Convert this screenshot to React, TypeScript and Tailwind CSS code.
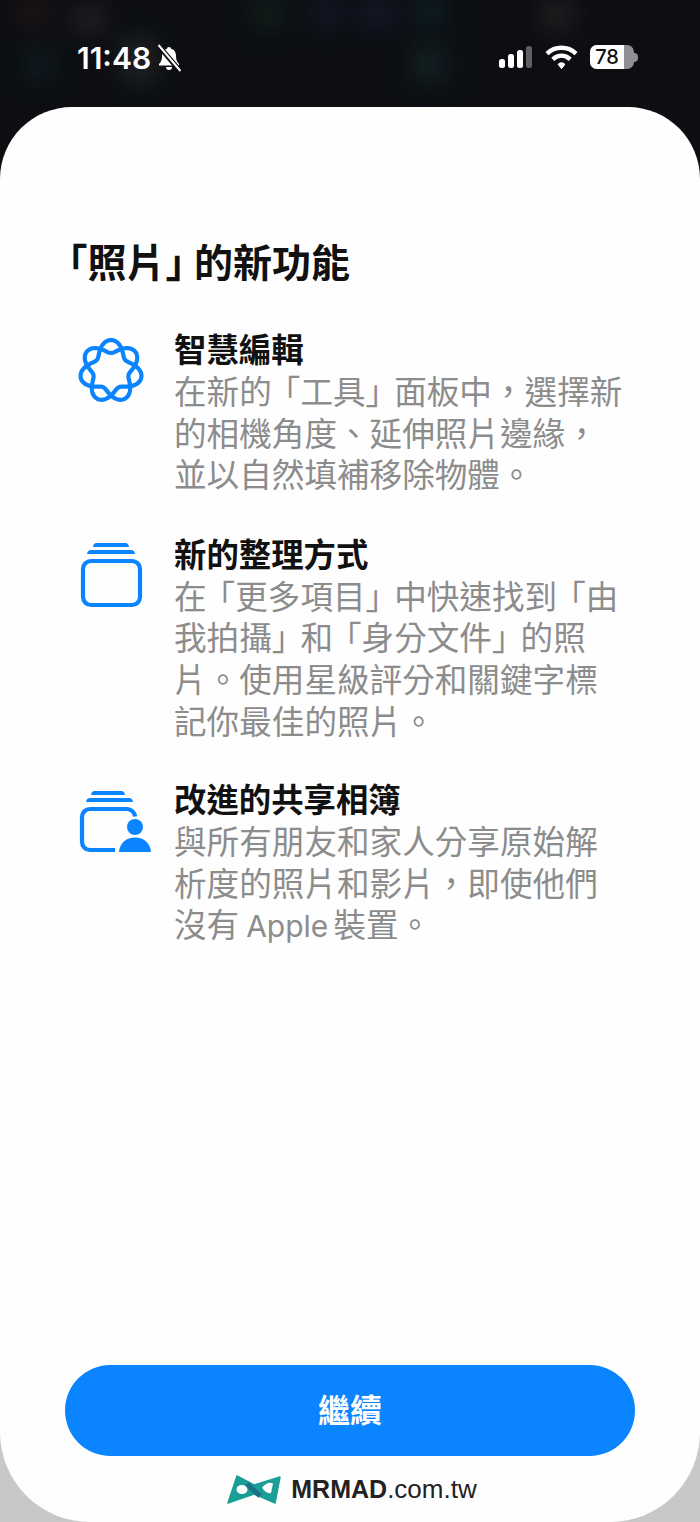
const F = '"Inter","Noto Sans CJK TC",sans-serif';

function weavePath() {
  const pts: string[] = [];
  const n = 280;
  for (let i = 0; i <= n; i++) {
    const t = (i / n) * 4 * Math.PI;
    const r = 24.5 + 6.5 * Math.cos(3.5 * t);
    const a = t - Math.PI / 2;
    pts.push(`${(33 + r * Math.cos(a)).toFixed(2)} ${(33 + r * Math.sin(a)).toFixed(2)}`);
  }
  return "M" + pts.join("L") + "Z";
}

function Sparkle() {
  return (
    <svg width="66" height="66" viewBox="0 0 66 66" fill="none" stroke="#0a84ff" strokeWidth="4.2" className="mt-[9px] ml-[24px]">
      <path d={weavePath()} strokeLinejoin="round" />
    </svg>
  );
}

function Stack() {
  return (
    <svg width="68" height="70" viewBox="0 0 68 70" fill="#0a84ff" className="mt-[6px] ml-[24px]">
      <path d="M15 7c.3-2.500 1.500-4 3.500-4h29c2 0 3.200 1.500 3.500 4z" />
      <path d="M9 14c.3-2.500 1.800-4 4-4h40c2.200 0 3.700 1.500 4 4z" />
      <rect x="5" y="21" width="57" height="44" rx="8" fill="none" stroke="#0a84ff" strokeWidth="4.2" />
    </svg>
  );
}

function Shared() {
  return (
    <svg width="76" height="70" viewBox="0 0 76 70" fill="#0a84ff" className="mt-[6px] ml-[24px]">
      <path d="M13 10c.3-2.500 1.500-4 3.500-4h27c2 0 3.200 1.500 3.500 4z" />
      <path d="M8 17c.3-2.500 1.800-4 4-4h39c2.200 0 3.700 1.500 4 4z" />
      <path d="M37 65H12a8 8 0 0 1-8-8V32a8 8 0 0 1 8-8h37a8 8 0 0 1 8 7.500" fill="none" stroke="#0a84ff" strokeWidth="4.2" />
      <circle cx="57" cy="42" r="8" />
      <path d="M41 67c.5-8.500 7-14.500 16-14.500s15.500 6 16 14.500z" />
    </svg>
  );
}

// Body copy: corner brackets sit tighter than a full em, as in the reference.
function Tight({ text }: { text: string }) {
  const chars = Array.from(text);
  return (
    <>
      {chars.map((c, i) =>
        c === "」" || chars[i + 1] === "「" ? (
          <span key={i} className="tracking-[-4px]">{c}</span>
        ) : (
          c
        )
      )}
    </>
  );
}

function Feature({ icon, title, lines, className }: { icon: React.ReactNode; title: string; lines: React.ReactNode[]; className: string }) {
  return (
    <div className={`flex pl-[54px] ${className}`}>
      <div className="w-[120px] shrink-0">{icon}</div>
      <div>
        <div className="text-[32.4px] leading-[43px] font-bold text-[#111]">{title}</div>
        {lines.map((l, i) => (
          <div key={i} className="text-[32.6px] leading-[41.6px] text-[#8c8c8c] whitespace-nowrap">
            {typeof l === "string" ? <Tight text={l} /> : l}
          </div>
        ))}
      </div>
    </div>
  );
}

function Backdrop() {
  return (
    <div className="absolute inset-0 blur-[12px] opacity-70">
      <div className="absolute left-[18px] top-0 w-[32px] h-[26px] bg-[#2a1719]" />
      <div className="absolute left-[73px] top-[6px] w-[32px] h-[26px] bg-[#2b2b2d]" />
      <div className="absolute left-[27px] top-[50px] w-[24px] h-[30px] bg-[#12282c]" />
      <div className="absolute left-[122px] top-[38px] w-[34px] h-[44px] bg-[#2a2c2e]" />
      <div className="absolute left-[254px] top-0 w-[30px] h-[28px] bg-[#15291f]" />
      <div className="absolute left-[312px] top-0 w-[28px] h-[26px] bg-[#152038]" />
      <div className="absolute left-[361px] top-0 w-[32px] h-[28px] bg-[#1b1f38]" />
      <div className="absolute left-[415px] top-0 w-[30px] h-[24px] bg-[#0e2c32]" />
      <div className="absolute left-[412px] top-[46px] w-[34px] h-[36px] bg-[#162a2c]" />
      <div className="absolute left-[540px] top-0 w-[34px] h-[30px] bg-[#2a2626]" />
    </div>
  );
}

function StatusBar() {
  return (
    <div className="h-[107px] flex items-start justify-between pt-[41px] pl-[77px] pr-[62px] relative overflow-hidden bg-[#0c0e12]">
      <Backdrop />
      <div className="relative flex items-center gap-[6px] text-white">
        <span className="text-[30px] leading-[34px] font-semibold">11:48</span>
        <svg width="24" height="28" viewBox="0 0 24 28" fill="white">
          <path d="M12 3c-1.200 0-2 .8-2 1.800-3.500 1-5 4-5 7.200 0 4-1 6-3 8v1.500h20V20c-2-2-3-4-3-8 0-3.200-1.500-6.200-5-7.200C14 3.800 13.200 3 12 3z" />
          <path d="M9 23h6a3 3 0 0 1-6 0z" />
          <path d="M1 1l22 26" stroke="#0c0e12" strokeWidth="5" />
          <path d="M1.500 1l22 26" stroke="white" strokeWidth="2" />
        </svg>
      </div>
      <div className="relative flex items-center gap-[12px] mt-[3px]">
        <svg width="35" height="24" viewBox="0 0 35 24">
          <rect x="1" y="14" width="6" height="9" rx="2.500" fill="white" />
          <rect x="10" y="9" width="6" height="14" rx="2.500" fill="white" />
          <rect x="19" y="5" width="6" height="18" rx="2.500" fill="white" />
          <rect x="28" y="1" width="6" height="22" rx="2.500" fill="#5e6063" />
        </svg>
        <svg width="33" height="26" viewBox="0 0 34 26" fill="none" stroke="white" strokeLinecap="butt">
          <path d="M2 9.500C10.500 1.500 23.500 1.500 32 9.500" strokeWidth="4.500" />
          <path d="M8 15.500c5.500-5 12.500-5 18 0" strokeWidth="4.500" />
          <path d="M13.500 20.500L17 25l3.500-4.500c-2-2-5-2-7 0z" fill="white" stroke="white" strokeWidth="1" />
        </svg>
        <div className="flex items-center">
          <div className="w-[44px] h-[24px] rounded-[7px] overflow-hidden flex bg-[#8f8f91]">
            <div className="w-[34px] bg-white flex items-center justify-center text-[#111] text-[20px] font-medium leading-none">78</div>
          </div>
          <div className="w-[4px] h-[9px] rounded-r-full bg-[#8f8f91]" />
        </div>
      </div>
    </div>
  );
}

export default function App() {
  return (
    <div className="w-[700px] h-[1522px] bg-[#c8c8c8] overflow-hidden flex flex-col" lang="zh-Hant" style={{ fontFamily: F }}>
      <StatusBar />
      <div className="flex-1 relative">
        <div className="absolute left-0 right-0 top-0 h-[80px] bg-[#0c0e12]" />
        <div className="absolute inset-0 bg-[#fefefe] rounded-t-[72px] rounded-b-[90px] flex flex-col">
          <h1 className="text-[39px] leading-[44px] font-bold text-[#111] mt-[134px] ml-[68px] whitespace-nowrap">
            <span className="[font-feature-settings:'halt']">「</span>照片<span className="[font-feature-settings:'halt'] mr-[9px]">」</span>的新功能
          </h1>
          <Feature className="mt-[44px]" title="智慧編輯" icon={<Sparkle />} lines={["在新的「工具」面板中，選擇新", "的相機角度、延伸照片邊緣，", "並以自然填補移除物體。"]} />
          <Feature className="mt-[37px]" title="新的整理方式" icon={<Stack />} lines={["在「更多項目」中快速找到「由", "我拍攝」和「身分文件」的照", "片。使用星級評分和關鍵字標", "記你最佳的照片。"]} />
          <Feature className="mt-[36px]" title="改進的共享相簿" icon={<Shared />} lines={["與所有朋友和家人分享原始解", "析度的照片和影片，即使他們", <>沒有<span className="text-[30px] ml-[7px] mr-[5px]">Apple</span>裝置。</>]} />
          <div className="mt-auto mx-[65px] h-[91px] rounded-full bg-[#0a84ff] flex items-center justify-center text-white text-[32px] font-bold">繼續</div>
          <div className="h-[66px] flex items-start justify-center pt-[19px] gap-[10px] pl-[4px]">
            <svg width="54" height="29" viewBox="0 0 54 29">
              <path d="M10 1L27 10L53 2L48 28L27 19L1 28Z" fill="#1a9e96" stroke="#1a9e96" strokeWidth="1.500" strokeLinejoin="round" />
              <ellipse cx="15" cy="14.500" rx="5.500" ry="4.500" fill="#fefefe" />
              <path d="M35 12.500Q41 6 46 8.500L44 18Q39 19 35 12.500Z" fill="#fefefe" />
              <path d="M20 9L33 21" stroke="#1b6f8a" strokeWidth="5" />
            </svg>
            <div className="leading-[28px] text-[#222] whitespace-nowrap" style={{ fontFamily: '"Liberation Sans",sans-serif' }}>
              <span className="font-bold text-[25px]">MRMAD</span><span className="text-[26px]">.com.tw</span>
            </div>
          </div>
        </div>
      </div>
    </div>
  );
}
